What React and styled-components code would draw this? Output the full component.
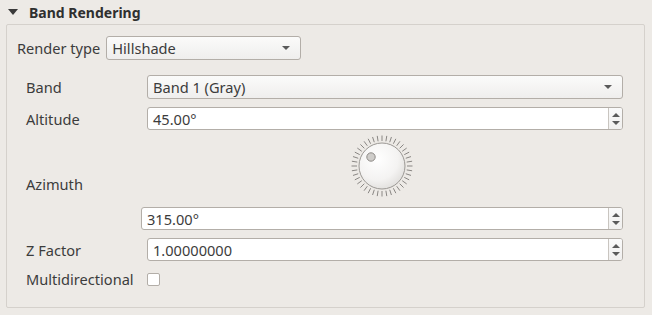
import React from 'react'
import styled, { createGlobalStyle } from 'styled-components'

const GlobalStyle = createGlobalStyle`
    body {
        margin: 0;
        background: #edeae6;
        font-family: "Noto Sans", "Open Sans", sans-serif;
        font-size: 14.6px;
        color: #3c3c3c;
    }
`

const Page = styled.div({
    width: "652px",
    height: "315px",
    boxSizing: "border-box",
    padding: "0 7px 7px 6px",
    display: "flex",
    flexDirection: "column"
})

const Header = styled.div`
    height: 24px;
    display: flex;
    align-items: center;
    gap: 11px;
    padding-left: 2px;
    font-weight: bold;
    font-size: 14px;
    color: #2f2f2f;
`

const Caret = styled.span`
    width: 0;
    height: 0;
    border-left: 5px solid transparent;
    border-right: 5px solid transparent;
    border-top: 6px solid #3a3a3a;
`

const Frame = styled.div`
    flex: 1;
    border: 1px solid #d5d1cc;
    border-radius: 2px;
    padding: 11px 21px 0 10px;
    display: flex;
    flex-direction: column;
`

const TopRow = styled.div`
    display: flex;
    align-items: center;
    gap: 6px;
`

const Form = styled.div`
    margin-top: 15px;
    margin-left: 9px;
    display: grid;
    grid-template-columns: 121px 1fr;
    row-gap: 8px;
    align-items: center;
`

const Label = styled.span`
    white-space: nowrap;
`

const Combo = styled.div`
    box-sizing: border-box;
    width: ${p => p.$width || "auto"};
    height: 24px;
    border: 1px solid #b3aea8;
    border-radius: 3px;
    background: linear-gradient(#fbfbfa, #efeeed);
    display: flex;
    align-items: center;
    padding: 0 10px 0 5px;
    justify-content: space-between;
`

const DownArrow = styled.span`
    width: 0;
    height: 0;
    border-left: 4px solid transparent;
    border-right: 4px solid transparent;
    border-top: 4px solid #5a5a5a;
`

const UpArrow = styled(DownArrow)`
    border-top: none;
    border-bottom: 4px solid #5a5a5a;
`

const Spin = styled.div`
    box-sizing: border-box;
    height: 23px;
    border: 1px solid #b3aea8;
    border-radius: 3px;
    background: #fff;
    display: flex;
`

const SpinText = styled.div`
    flex: 1;
    display: flex;
    align-items: center;
    padding-left: 5px;
`

const SpinButtons = styled.div`
    width: 13px;
    border-left: 1px solid #c9c5c0;
    background: linear-gradient(#fafafa, #f0efee);
    border-radius: 0 2px 2px 0;
    display: flex;
    flex-direction: column;
    align-items: center;
    justify-content: center;
    gap: 4px;
`

const AzimuthCell = styled.div`
    margin-left: -6px;
    display: flex;
    flex-direction: column;
    align-items: center;
    gap: 5px;
`

const Stretch = styled.div`
    align-self: stretch;
`

const Check = styled.span`
    box-sizing: border-box;
    width: 13px;
    height: 13px;
    border: 1px solid #b3aea8;
    border-radius: 2px;
    background: #fff;
`

const Dial = () => {
    const cx = 35, cy = 28
    const ticks = []
    for (let i = 0; i < 40; i++) {
        const a = (i / 40) * Math.PI * 2
        const r1 = 25, r2 = 30.5
        ticks.push(
            <line key={i}
                x1={cx + Math.cos(a) * r1} y1={cy + Math.sin(a) * r1}
                x2={cx + Math.cos(a) * r2} y2={cy + Math.sin(a) * r2}
                stroke="#8a8784" strokeWidth="1" />
        )
    }
    return (
        <svg width="70" height="64" viewBox="0 0 70 64" style={{ overflow: "visible" }}>
            <defs>
                <radialGradient id="knob" cx="0.4" cy="0.35" r="0.75">
                    <stop offset="0" stopColor="#ffffff" />
                    <stop offset="0.6" stopColor="#f4f3f2" />
                    <stop offset="1" stopColor="#dcdad7" />
                </radialGradient>
            </defs>
            {ticks}
            <circle cx={cx} cy={cy} r="23" fill="url(#knob)" stroke="#9b9894" strokeWidth="1" />
            <circle cx={cx - 11} cy={cy - 9} r="4.2" fill="#cfcdca" stroke="#8f8c88" strokeWidth="1" />
        </svg>
    )
}

const SpinBox = ({ value }) => (
    <Spin>
        <SpinText>{value}</SpinText>
        <SpinButtons>
            <UpArrow />
            <DownArrow />
        </SpinButtons>
    </Spin>
)

const App = () => {
    return (
        <Page>
            <GlobalStyle />
            <Header>
                <Caret />
                <span>Band Rendering</span>
            </Header>
            <Frame>
                <TopRow>
                    <Label>Render type</Label>
                    <Combo $width="195px">
                        <span>Hillshade</span>
                        <DownArrow />
                    </Combo>
                </TopRow>
                <Form>
                    <Label>Band</Label>
                    <Combo>
                        <span>Band 1 (Gray)</span>
                        <DownArrow />
                    </Combo>

                    <Label>Altitude</Label>
                    <SpinBox value="45.00°" />

                    <Label>Azimuth</Label>
                    <AzimuthCell>
                        <Dial />
                        <Stretch>
                            <SpinBox value="315.00°" />
                        </Stretch>
                    </AzimuthCell>

                    <Label>Z Factor</Label>
                    <SpinBox value="1.00000000" />

                    <Label>Multidirectional</Label>
                    <Check />
                </Form>
            </Frame>
        </Page>
    )
}

export default App
